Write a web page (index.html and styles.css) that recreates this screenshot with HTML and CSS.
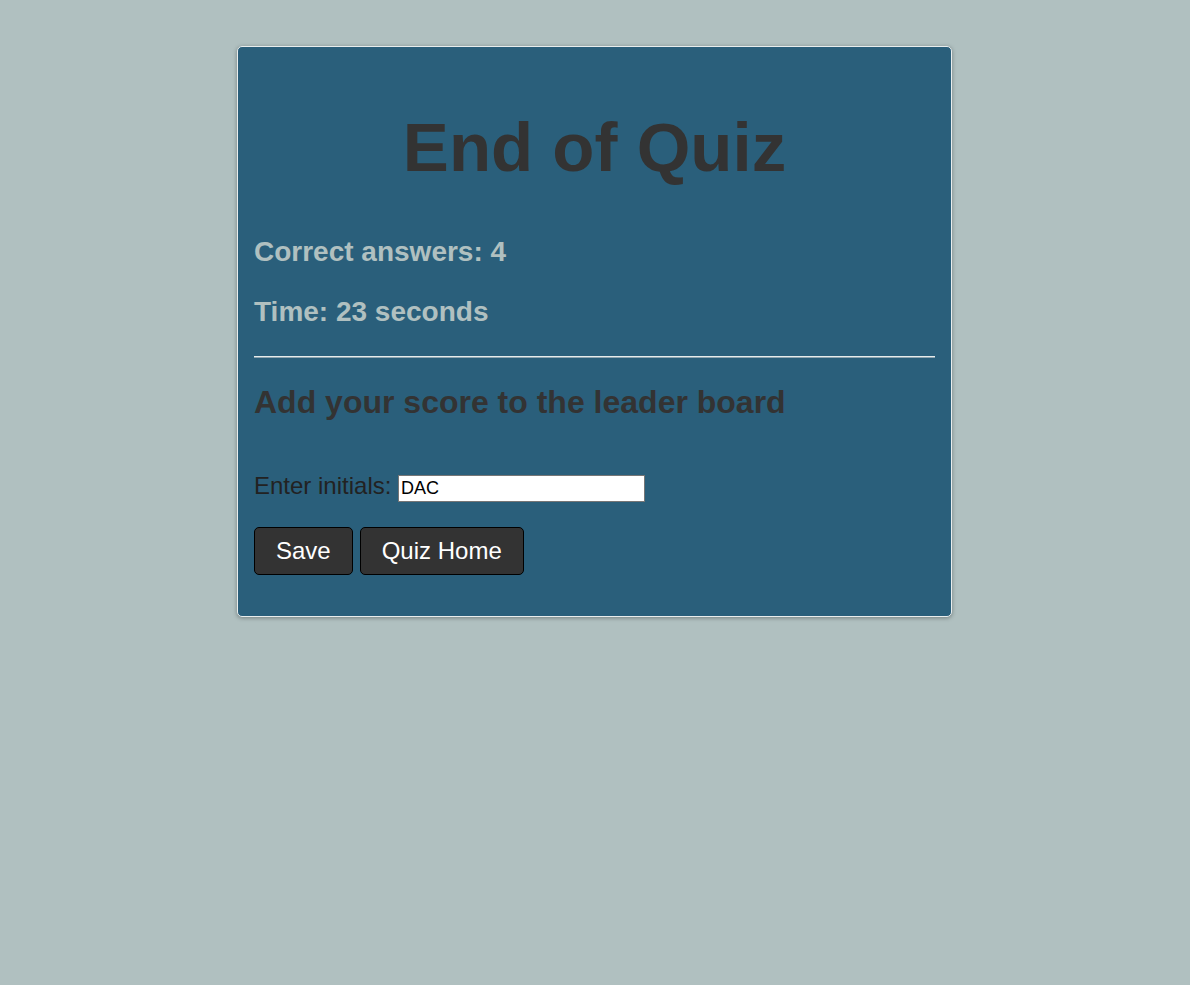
FILE: index.html
```html
<!DOCTYPE html>
<html lang="en">
<head>
<meta charset="utf-8">
<title>End of Quiz</title>
<link rel="stylesheet" href="styles.css">
</head>
<body>
  <main class="card">
    <h1 class="title">End of Quiz</h1>
    <p class="stat">Correct answers: 4</p>
    <p class="stat">Time: 23 seconds</p>
    <hr class="divider">
    <h2 class="subtitle">Add your score to the leader board</h2>
    <div class="entry">
      <label class="entry-label" for="initials">Enter initials:</label>
      <input class="entry-input" id="initials" type="text" value="DAC">
    </div>
    <div class="actions">
      <button class="btn" type="button">Save</button>
      <button class="btn" type="button">Quiz Home</button>
    </div>
  </main>
</body>
</html>
```

FILE: styles.css
```css
html, body {
  margin: 0;
  padding: 0;
}

body {
  background: #b0c0c0;
  font-family: "Liberation Sans", Arial, sans-serif;
  min-height: 985px;
  padding-right: 1px;
}

.card {
  box-sizing: border-box;
  width: 715px;
  margin: 46px auto 0;
  padding: 13px 16px 41px;
  background: #2a5f7b;
  border: 1px solid #e8eded;
  border-radius: 5px;
  box-shadow: 0 1px 4px rgba(0, 0, 0, 0.35);
}

.title {
  margin: 48px 0 49px;
  font-size: 69px;
  font-weight: bold;
  line-height: normal;
  text-align: center;
  color: #333333;
}

.stat {
  margin: 28px 0;
  font-size: 28px;
  font-weight: bold;
  line-height: normal;
  color: #b0c0c0;
}

.divider {
  height: 0;
  margin: 28px 0 0;
  border: none;
  border-top: 1px solid #e6ecec;
  border-bottom: 1px solid #8fa5b0;
}

.subtitle {
  margin: 26px 0 0;
  font-size: 32px;
  font-weight: bold;
  line-height: normal;
  color: #333333;
}

.entry {
  margin-top: 51px;
  font-size: 24px;
  line-height: normal;
  color: #222222;
}

.entry-input {
  box-sizing: border-box;
  width: 247px;
  height: 27px;
  padding: 0 2px;
  margin: 0;
  border: 1px solid #767676;
  background: #ffffff;
  font-family: "Liberation Sans", Arial, sans-serif;
  font-size: 18px;
  color: #000000;
  vertical-align: baseline;
}

.actions {
  display: flex;
  gap: 7px;
  margin-top: 25px;
}

.btn {
  box-sizing: border-box;
  height: 48px;
  padding: 0 21px;
  background: #333333;
  border: 1px solid #000000;
  border-radius: 5px;
  color: #ffffff;
  font-family: "Liberation Sans", Arial, sans-serif;
  font-size: 24px;
  line-height: 28px;
  cursor: pointer;
}
```
